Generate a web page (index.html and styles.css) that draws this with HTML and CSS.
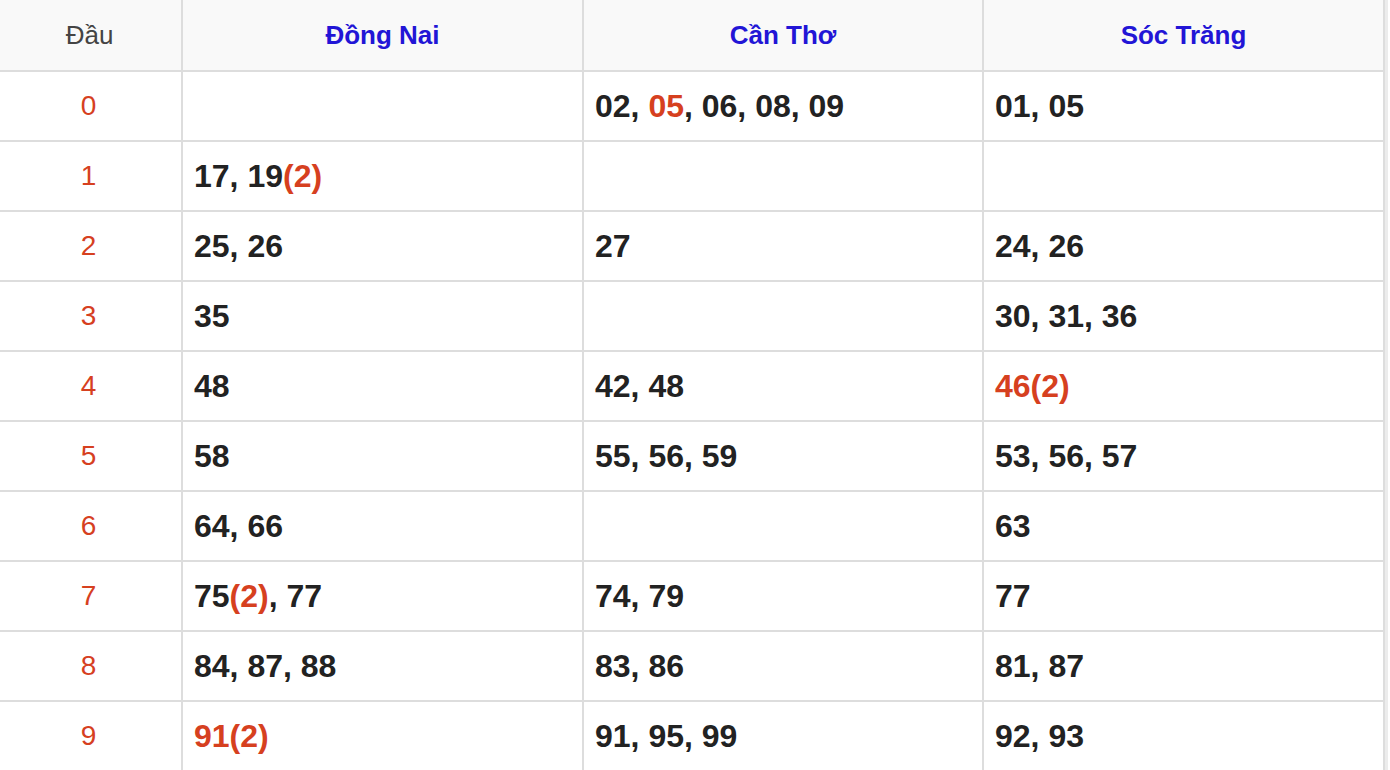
FILE: index.html
```html
<!DOCTYPE html>
<html lang="vi">
<head>
<meta charset="utf-8">
<title>Lô tô</title>
<link rel="stylesheet" href="styles.css">
</head>
<body>
<div class="wrap">
  <div class="grid">
    <div class="cell head dau"><span>Đầu</span></div>
    <div class="cell head prov"><span>Đồng Nai</span></div>
    <div class="cell head prov"><span>Cần Thơ</span></div>
    <div class="cell head prov"><span>Sóc Trăng</span></div>

    <div class="cell num"><span>0</span></div>
    <div class="cell val"></div>
    <div class="cell val"><span>02, <span class="r">05</span>, 06, 08, 09</span></div>
    <div class="cell val"><span>01, 05</span></div>

    <div class="cell num"><span>1</span></div>
    <div class="cell val"><span>17, 19<span class="r">(2)</span></span></div>
    <div class="cell val"></div>
    <div class="cell val"></div>

    <div class="cell num"><span>2</span></div>
    <div class="cell val"><span>25, 26</span></div>
    <div class="cell val"><span>27</span></div>
    <div class="cell val"><span>24, 26</span></div>

    <div class="cell num"><span>3</span></div>
    <div class="cell val"><span>35</span></div>
    <div class="cell val"></div>
    <div class="cell val"><span>30, 31, 36</span></div>

    <div class="cell num"><span>4</span></div>
    <div class="cell val"><span>48</span></div>
    <div class="cell val"><span>42, 48</span></div>
    <div class="cell val"><span class="r">46(2)</span></div>

    <div class="cell num"><span>5</span></div>
    <div class="cell val"><span>58</span></div>
    <div class="cell val"><span>55, 56, 59</span></div>
    <div class="cell val"><span>53, 56, 57</span></div>

    <div class="cell num"><span>6</span></div>
    <div class="cell val"><span>64, 66</span></div>
    <div class="cell val"></div>
    <div class="cell val"><span>63</span></div>

    <div class="cell num"><span>7</span></div>
    <div class="cell val"><span>75<span class="r">(2)</span>, 77</span></div>
    <div class="cell val"><span>74, 79</span></div>
    <div class="cell val"><span>77</span></div>

    <div class="cell num"><span>8</span></div>
    <div class="cell val"><span>84, 87, 88</span></div>
    <div class="cell val"><span>83, 86</span></div>
    <div class="cell val"><span>81, 87</span></div>

    <div class="cell num"><span>9</span></div>
    <div class="cell val"><span class="r">91(2)</span></div>
    <div class="cell val"><span>91, 95, 99</span></div>
    <div class="cell val"><span>92, 93</span></div>
  </div>
</div>
</body>
</html>
```

FILE: styles.css
```css
html, body {
  margin: 0;
  padding: 0;
  background: #ffffff;
}

body {
  font-family: "Liberation Sans", Arial, sans-serif;
  overflow: hidden;
}

.wrap {
  width: 1385px;
  border-right: 3px solid #ececec;
}

.grid {
  display: grid;
  grid-template-columns: 183px 401px 400px 401px;
  grid-template-rows: 72px;
  grid-auto-rows: 70px;
}

.cell {
  box-sizing: border-box;
  border-right: 2px solid #dddddd;
  border-bottom: 2px solid #dddddd;
  display: flex;
  align-items: center;
  background: #ffffff;
  white-space: pre;
}

.head {
  background: #f9f9f9;
  justify-content: center;
  font-size: 26px;
}

.dau {
  color: #444444;
  font-weight: normal;
  padding-right: 2px;
}

.prov {
  color: #2215d6;
  font-weight: bold;
}

.num {
  justify-content: center;
  color: #d6401f;
  font-size: 28px;
  padding-right: 4px;
}

.val {
  padding-left: 11px;
  font-size: 32px;
  font-weight: bold;
  color: #222222;
}

.r {
  color: #d6401f;
}
```
